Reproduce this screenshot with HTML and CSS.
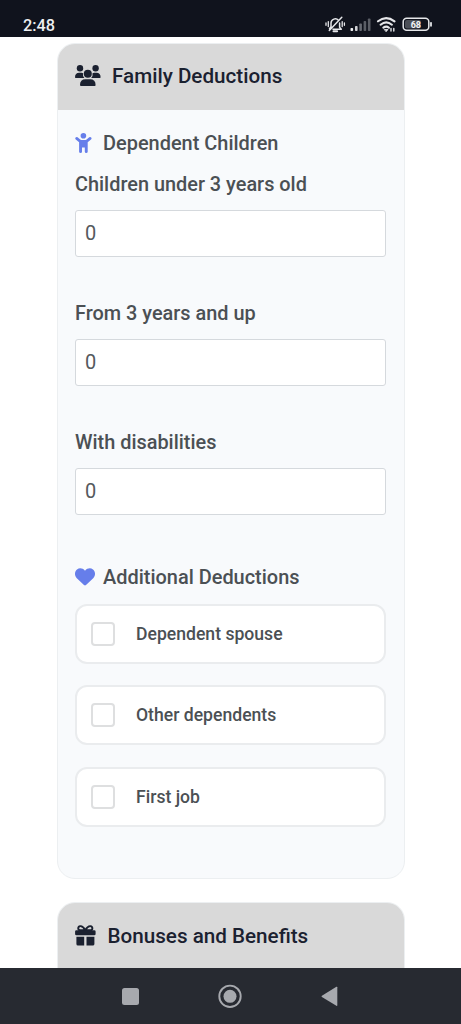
FILE: index.html
```html
<!DOCTYPE html>
<html lang="en">
<head>
<meta charset="utf-8">
<meta name="viewport" content="width=device-width, initial-scale=1">
<title>Family Deductions</title>
<link rel="stylesheet" href="styles.css">
</head>
<body>
<div class="screen">
  <header class="status">
    <span class="time">2:48</span>
    <svg class="status-icons" width="110" height="22" viewBox="325 14 110 22" fill="none" stroke="#e6e7ea" stroke-width="1.5" stroke-linecap="round" stroke-linejoin="round">
      <path d="M331 27V23a4.200 4.200 0 0 1 7.500-2.500M339.600 23v4.300l1.700 2H333M341.800 17.300 329.300 30.500M331 26.800l-1.500 2"/>
      <path d="M333.500 31.300h3.600" stroke-width="2"/>
      <path d="M328.300 21.600v5M342.200 21.600v5M326 22.900v2.400M344.400 22.900v2.400" stroke-width="1.300"/>
      <g stroke="none">
        <rect x="350.500" y="28" width="2.600" height="3" rx=".8" fill="#f2f2f4"/>
        <rect x="355" y="26" width="2.600" height="5" rx=".8" fill="#d0d1d5"/>
        <rect x="359.300" y="23.500" width="2.600" height="7.500" rx=".8" fill="#686b73"/>
        <rect x="363.600" y="21" width="2.600" height="10" rx=".8" fill="#5b5e66"/>
        <rect x="367.900" y="18.500" width="2.600" height="12.500" rx=".8" fill="#5b5e66"/>
      </g>
      <path d="M378 21.300q8-6.500 16.500 0M380.600 24.700q5.600-4.500 11.300 0M383.400 27.700q2.900-2.200 5.500 0" stroke-width="2.100"/>
      <path d="M384.600 29.500h3.400l-1.700 2z" fill="#e6e7ea" stroke-width=".8"/>
      <path d="M391 28.500v2.500M393.800 28.500v2.500" stroke-width="1.400"/>
      <rect x="403.200" y="18.300" width="25.600" height="12" rx="3.500" stroke-width="1.500"/>
      <rect x="405" y="20" width="16" height="8.600" rx="2" fill="#4c4f57" stroke="none"/>
      <path d="M431 22.800v3" stroke-width="1.800"/>
      <text class="battery" x="415.800" y="27.900" text-anchor="middle">68</text>
    </svg>
  </header>

  <main class="content">
    <section class="card">
      <h2 class="card-head">
        <svg width="26" height="22" viewBox="0 0 26 22" fill="#1b2130">
          <circle cx="5" cy="3.300" r="3.200"/><circle cx="20.600" cy="3.300" r="3.200"/>
          <path d="M0 12.300Q0 7.800 4.200 7.800H6.500q1 0 1.600.4-.7 2.700 1.300 4.800H.7q-.7 0-.7-.7zM25.600 12.300q0-4.500-4.200-4.500h-2.300q-1 0-1.600.4.700 2.700-1.300 4.800h8.700q.7 0 .7-.7z"/>
          <circle cx="12.800" cy="8.800" r="4"/>
          <path d="M5 20q0-5.700 5.600-5.700h4.400q5.600 0 5.600 5.700 0 1-1 1H6q-1 0-1-1z"/>
        </svg>
        <span>Family Deductions</span>
      </h2>
      <div class="card-body">
        <h3 class="group-title">
          <svg width="17" height="22" viewBox="0 0 17 22" fill="#667eea">
            <circle cx="8.400" cy="3.700" r="2.800"/>
            <path d="M2.600 5.300 5.200 7.500q.9.600 2.100.6h2.200q1.200 0 2.100-.6l2.600-2.200q1.100-.8 2 .2.800 1.100-.2 2L12.700 10.300v9.500q-.1 1.300-1.500 1.300-1.300-.1-1.400-1.300v-4.300H7v4.300q-.1 1.300-1.400 1.300-1.400 0-1.500-1.300v-9.500L.8 7.500q-1-.9-.2-2 .9-1 2-.2z"/>
          </svg>
          <span>Dependent Children</span>
        </h3>
        <div class="field">
          <label for="under">Children under 3 years old</label>
          <input id="under" type="text" value="0">
        </div>
        <div class="field">
          <label for="up">From 3 years and up</label>
          <input id="up" type="text" value="0">
        </div>
        <div class="field">
          <label for="dis">With disabilities</label>
          <input id="dis" type="text" value="0">
        </div>
        <h3 class="group-title group-additional">
          <svg width="20" height="18" viewBox="0 0 20 18" fill="#667eea">
            <path d="M1.800 10.300C-.8 7.800-.5 3.300 2 1.500 4.500-.5 7.600.1 10 2.700 12.400.1 15.500-.5 18 1.500c2.500 1.800 2.800 6.300.2 8.800l-7.200 6.800q-1 .9-2 0z"/>
          </svg>
          <span>Additional Deductions</span>
        </h3>
        <div class="options">
          <label class="option"><input type="checkbox"><span>Dependent spouse</span></label>
          <label class="option"><input type="checkbox"><span>Other dependents</span></label>
          <label class="option"><input type="checkbox"><span>First job</span></label>
        </div>
      </div>
    </section>
    <section class="card">
      <h2 class="card-head card-head-gift">
        <svg width="21" height="21" viewBox="0 0 21 21">
          <path d="M10.300 5.200C8.600 2 7 .9 5.200 1.100 2.500 1.500 2.700 5 5 5.200zM10.300 5.200C12 2 13.600.9 15.400 1.100c2.700.4 2.500 3.900.2 4.100z" fill="none" stroke="#1b2130" stroke-width="1.900"/>
          <path d="M1.400 5.200h17.900q1.300 0 1.300 1.300v2.600q0 1.200-1.300 1.200H1.400Q.1 10.300.1 9.100V6.500q0-1.300 1.300-1.300zM1.400 11.800h7.800v8.800H3q-1.600 0-1.600-1.600zM11.500 11.800h7.900V19q0 1.600-1.600 1.600h-6.300z" fill="#1b2130"/>
        </svg>
        <span>Bonuses and Benefits</span>
      </h2>
      <div class="card-body"></div>
    </section>
  </main>

  <nav class="navbar">
    <svg width="461" height="56" viewBox="0 968 461 56" fill="#a7a9ae">
      <rect x="122" y="988" width="17" height="17" rx="2.500"/>
      <circle cx="230" cy="996.300" r="10.700" fill="none" stroke="#a7a9ae" stroke-width="1.900"/>
      <circle cx="230" cy="996.300" r="6.500"/>
      <path d="M337.300 987.300v18q0 .9-.9.400l-14.500-8.700q-.8-.6 0-1.300l14.500-8.900q.9-.4.900.5z"/>
    </svg>
  </nav>
</div>
</body>
</html>
```
FILE: styles.css
```css
* { box-sizing: border-box; }
body { margin: 0; background: #fff; font-family: Roboto, "Liberation Sans", sans-serif; }
.screen { width: 461px; height: 1024px; display: flex; flex-direction: column; overflow: hidden; }
.status { height: 37px; flex: none; background: #10131d; display: flex; justify-content: space-between; align-items: flex-start; padding: 14px 26px 0 23px; }
.time { font-size: 16.3px; line-height: 24px; font-weight: 500; color: #eeeff1; }
.battery { font: 700 9px Roboto, sans-serif; fill: #f4f4f6; stroke: none; }
.content { flex: 1; min-height: 0; overflow: hidden; padding: 5.500px 56.500px 0 56.500px; display: flex; flex-direction: column; gap: 23.500px; }
.card { flex: none; border: 1px solid #eceff1; border-radius: 18px; background: #f8fafc; overflow: hidden; }
.card:first-child { height: 836px; }
.card-head { margin: -1px -1px 0; height: 67px; padding: 0 18.500px; display: flex; align-items: center; gap: 11px; background: #d9d9d9; color: #1b2130; font-size: 20.650px; font-weight: 500; white-space: nowrap; }
.card-head svg, .group-title svg { flex: none; }
.card-head-gift { gap: 11.500px; }
.card-body { padding: 19.500px 17.500px 0; color: #4b5054; }
.group-title { margin: 0; height: 28px; display: flex; align-items: center; gap: 11px; font-size: 19.950px; font-weight: 500; white-space: nowrap; }
.field { margin-top: 13px; height: 116px; display: flex; flex-direction: column; gap: 12px; }
.field label { height: 28px; line-height: 30px; font-size: 19.900px; font-weight: 500; }
.field input { width: 100%; height: 47px; margin: 0; border: 1px solid #d5d9dd; border-radius: 3px; background: #fff; padding: 0 9px 2px; font: 400 20px Roboto, sans-serif; color: #55595d; }
.group-additional { margin-top: 19px; gap: 8px; }
.options { margin-top: 12.500px; display: flex; flex-direction: column; gap: 21.700px; }
.option { width: 100%; height: 60px; display: flex; align-items: center; gap: 21px; padding: 0 14px; background: #fff; border: 2px solid #eaecee; border-radius: 12px; font-size: 17.600px; font-weight: 500; }
.option input { appearance: none; width: 24px; height: 24px; margin: 0; border: 2px solid #dedfe0; border-radius: 4px; background: #fff; }
.navbar { height: 56px; flex: none; background: #272a31; }
.navbar svg { display: block; }
```
